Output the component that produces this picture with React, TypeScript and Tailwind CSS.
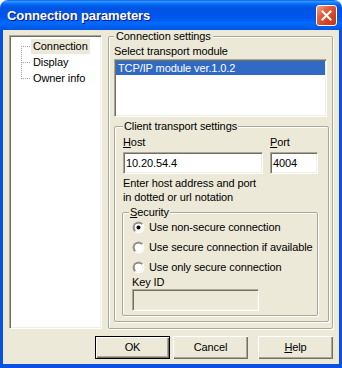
import React from "react";

const sunken =
  "border border-t-[#aca899] border-l-[#aca899] border-r-white border-b-white shadow-[inset_1px_1px_0_#716f64,inset_-1px_-1px_0_#f1efe2]";
const etched =
  "border border-[#aca899] shadow-[inset_1px_1px_0_#ffffff,1px_1px_0_#ffffff]";

function TreeRow({ label, idx, last, selected }: { label: string; idx: number; last: boolean; selected?: boolean }) {
  const y1 = idx === 0 ? 8 : 0;
  const y2 = last ? 8 : 16;
  return (
    <div className="flex h-[16px] items-center">
      <svg width="21" height="16" className="shrink-0" shapeRendering="crispEdges">
        <line x1="11.5" y1={y1} x2="11.5" y2={y2} stroke="#a0a0a0" strokeDasharray="1 1" />
        <line x1="11" y1="8.5" x2="21" y2="8.5" stroke="#a0a0a0" strokeDasharray="1 1" />
      </svg>
      <span className={selected ? "bg-[#ece9d8] px-[2px] leading-[15px]" : "px-[2px] leading-[15px]"}>{label}</span>
    </div>
  );
}

function Radio({ checked, id, label }: { checked?: boolean; id: string; label: string }) {
  return (
    <div className="flex h-[18px] items-center">
      <svg width="13" height="13" viewBox="0 0 13 13" className="shrink-0">
        <defs>
          <linearGradient id={`o${id}`} x1="0" y1="0" x2="1" y2="1">
            <stop offset="0.5" stopColor="#aca899" />
            <stop offset="0.5" stopColor="#ffffff" />
          </linearGradient>
          <linearGradient id={`i${id}`} x1="0" y1="0" x2="1" y2="1">
            <stop offset="0.5" stopColor="#716f64" />
            <stop offset="0.5" stopColor="#f1efe2" />
          </linearGradient>
        </defs>
        <circle cx="6.5" cy="6.5" r="6" fill={`url(#o${id})`} />
        <circle cx="6.5" cy="6.5" r="5" fill={`url(#i${id})`} />
        <circle cx="6.5" cy="6.5" r="4" fill="#ffffff" />
        {checked && <circle cx="6.5" cy="6.5" r="2" fill="#000000" />}
      </svg>
      <span className="ml-[4px]">{label}</span>
    </div>
  );
}

export default function App() {
  return (
    <div className="w-[342px] h-[368px] flex flex-col font-['Liberation_Sans',Arial,sans-serif] text-[11px] leading-[13px] tracking-[-0.1px] text-black bg-white">
      {/* Title bar */}
      <div className="h-[30px] shrink-0 rounded-t-[8px] bg-[linear-gradient(180deg,#0058ee_0%,#3593ff_4%,#288eff_7%,#127dff_10%,#036ffc_13%,#0262ee_17%,#0057e5_23%,#0054e3_27%,#0055eb_56%,#005bf5_66%,#026afe_76%,#0062ef_86%,#0055e5_100%)] flex items-center pl-[7px] pr-[5px]">
        <span className="text-white font-bold text-[13px] tracking-[-0.1px] [text-shadow:1px_1px_0_#0a1883]">
          Connection parameters
        </span>
        <div className="ml-auto w-[21px] h-[21px] rounded-[3px] border border-white bg-[linear-gradient(135deg,#f0a48a_0%,#e4603f_35%,#d2411f_70%,#c23a1c_100%)] flex items-center justify-center">
          <svg width="11" height="11" viewBox="0 0 11 11">
            <path d="M1.5 1.5 L9.5 9.5 M9.5 1.5 L1.5 9.5" stroke="#ffffff" strokeWidth="2" strokeLinecap="square" />
          </svg>
        </div>
      </div>

      {/* Body */}
      <div className="flex-1 flex flex-col bg-[#ece9d8] border-x-[3px] border-b-[4px] border-[#0a50e3] px-[6px] pb-[5px]">
        <div className="flex gap-[6px] items-stretch">
          {/* Tree */}
          <div className={`w-[93px] mt-[5px] bg-white ${sunken}`}>
            <div className="flex flex-col pt-[2px]">
              <TreeRow label="Connection" idx={0} last={false} selected />
              <TreeRow label="Display" idx={1} last={false} />
              <TreeRow label="Owner info" idx={2} last />
            </div>
          </div>

          {/* Connection settings */}
          <fieldset className={`w-[225px] rounded-[2px] pl-[5px] pr-[3px] pb-[6px] ${etched}`}>
            <legend className="px-[2px] bg-[#ece9d8] leading-[13px]">Connection settings</legend>
            <div className="pt-[2px]">Select transport module</div>
            <div className={`w-[213px] h-[58px] mt-[1px] bg-white p-[1px] ${sunken}`}>
              <div className="h-[14px] bg-[#316ac5] text-white pl-[2px] leading-[14px]">TCP/IP module ver.1.0.2</div>
            </div>

            {/* Client transport settings */}
            <fieldset className={`mt-[3px] rounded-[2px] pl-[8px] pr-[10px] pb-[5px] ${etched}`}>
              <legend className="px-[1px] bg-[#ece9d8] leading-[13px]">Client transport settings</legend>
              <div className="flex gap-[7px] pt-[3px]">
                <div className="flex flex-col w-[140px]">
                  <span>
                    <span className="underline">H</span>ost
                  </span>
                  <div className={`mt-[3px] h-[22px] bg-white flex items-center pl-[2px] ${sunken}`}>10.20.54.4</div>
                </div>
                <div className="flex flex-col w-[48px]">
                  <span>
                    <span className="underline">P</span>ort
                  </span>
                  <div className={`mt-[3px] h-[22px] bg-white flex items-center pl-[2px] ${sunken}`}>4004</div>
                </div>
              </div>
              <div className="mt-[2px] leading-[14px]">
                Enter host address and port
                <br />
                in dotted or url notation
              </div>

              {/* Security */}
              <fieldset className={`mt-[2px] -ml-[1px] rounded-[2px] pl-[9px] pb-[4px] ${etched}`}>
                <legend className="-ml-[3px] px-[1px] bg-[#ece9d8] leading-[13px]">
                  <span className="underline">S</span>ecurity
                </legend>
                <div className="flex flex-col gap-[2px] -mt-[1px]">
                  <Radio id="r1" checked label="Use non-secure connection" />
                  <Radio id="r2" label="Use secure connection if available" />
                  <Radio id="r3" label="Use only secure connection" />
                </div>
                <div>Key ID</div>
                <div className={`w-[127px] h-[22px] bg-[#ece9d8] ${sunken}`}></div>
              </fieldset>
            </fieldset>
          </fieldset>
        </div>

        {/* Buttons */}
        <div className="flex justify-end mt-[7px]">
          <button className="w-[75px] h-[23px] border border-black bg-[#ece9d8] shadow-[inset_1px_1px_0_#ffffff,inset_-1px_-1px_0_#716f64,inset_-2px_-2px_0_#aca899] flex items-center justify-center">
            OK
          </button>
          <button className="ml-[3px] w-[75px] h-[23px] bg-[#ece9d8] shadow-[inset_1px_1px_0_#ffffff,inset_-1px_-1px_0_#716f64,inset_-2px_-2px_0_#aca899] flex items-center justify-center">
            Cancel
          </button>
          <button className="ml-[10px] w-[75px] h-[23px] bg-[#ece9d8] shadow-[inset_1px_1px_0_#ffffff,inset_-1px_-1px_0_#716f64,inset_-2px_-2px_0_#aca899] flex items-center justify-center">
            <span>
              <span className="underline">H</span>elp
            </span>
          </button>
        </div>
      </div>
    </div>
  );
}
